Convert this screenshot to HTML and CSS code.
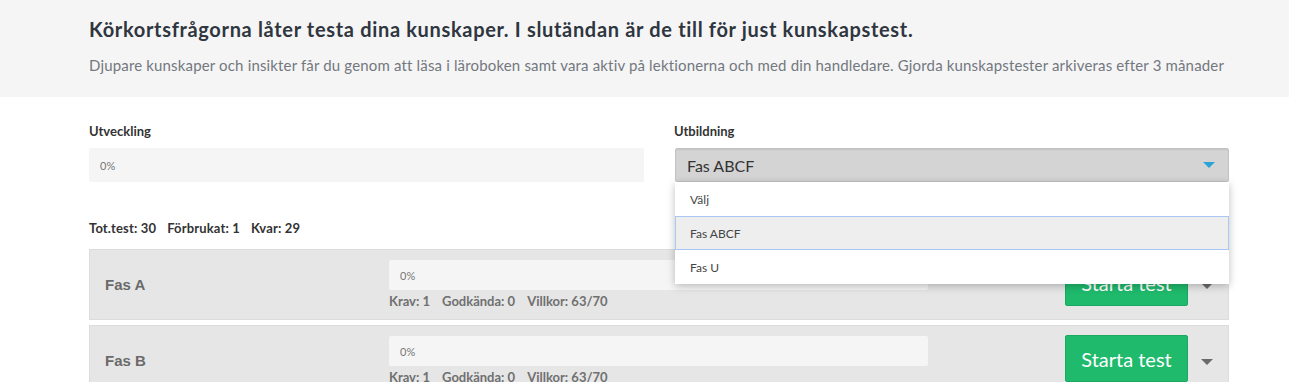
FILE: index.html
```html
<!DOCTYPE html>
<html lang="sv">
<head>
<meta charset="utf-8">
<title>Kunskapstest</title>
<link rel="stylesheet" href="styles.css">
</head>
<body>
<header class="intro">
  <h1 class="intro-title">Körkortsfrågorna låter testa dina kunskaper. I slutändan är de till för just kunskapstest.</h1>
  <p class="intro-text">Djupare kunskaper och insikter får du genom att läsa i läroboken samt vara aktiv på lektionerna och med din handledare. Gjorda kunskapstester arkiveras efter 3 månader</p>
</header>
<main class="content">
  <div class="top-grid">
    <div class="field">
      <div class="field-label">Utveckling</div>
      <div class="progress progress-lg"><span class="progress-text">0%</span></div>
    </div>
    <div class="field field-select">
      <div class="field-label">Utbildning</div>
      <div class="select">
        <span class="select-value">Fas ABCF</span>
        <span class="select-caret"></span>
      </div>
      <ul class="select-menu">
        <li class="select-option">Välj</li>
        <li class="select-option is-active">Fas ABCF</li>
        <li class="select-option">Fas U</li>
      </ul>
    </div>
  </div>
  <div class="stats"><span>Tot.test: 30</span><span>Förbrukat: 1</span><span>Kvar: 29</span></div>
  <div class="phase">
    <div class="phase-name">Fas A</div>
    <div class="phase-progress">
      <div class="progress"><span class="progress-text">0%</span></div>
      <div class="phase-meta"><span>Krav: 1</span><span>Godkända: 0</span><span>Villkor: 63/70</span></div>
    </div>
    <div class="phase-actions">
      <button class="btn-start">Starta test</button>
      <span class="phase-caret"></span>
    </div>
  </div>
  <div class="phase">
    <div class="phase-name">Fas B</div>
    <div class="phase-progress">
      <div class="progress"><span class="progress-text">0%</span></div>
      <div class="phase-meta"><span>Krav: 1</span><span>Godkända: 0</span><span>Villkor: 63/70</span></div>
    </div>
    <div class="phase-actions">
      <button class="btn-start">Starta test</button>
      <span class="phase-caret"></span>
    </div>
  </div>
</main>
</body>
</html>
```
FILE: styles.css
```css
* { box-sizing: border-box; }
html, body { margin: 0; padding: 0; background: #fff; }
body {
  font-family: Lato, "Open Sans", "Liberation Sans", sans-serif;
  color: #333;
  overflow: hidden;
}
.intro {
  background: #f5f5f5;
  height: 97px;
  padding: 16px 0 0 89px;
}
.intro-title {
  margin: 0;
  font-size: 20px;
  font-weight: 700;
  line-height: 26px;
  letter-spacing: 0.67px;
  color: #2f3640;
}
.intro-text {
  margin: 13px 0 0;
  font-size: 15px;
  line-height: 20px;
  letter-spacing: 0.16px;
  color: #737880;
}
.content {
  width: 1229px;
  padding: 25px 0 0 89px;
}
.top-grid {
  display: grid;
  grid-template-columns: 555px 555px;
  column-gap: 30px;
}
.field { position: relative; }
.field-label {
  font-size: 13px;
  font-weight: 700;
  line-height: 18px;
  color: #333;
  margin-bottom: 8px;
}
.progress {
  background: #f5f5f5;
  border-radius: 2px;
  height: 30px;
  display: flex;
  align-items: center;
  padding-left: 11px;
}
.progress-lg { height: 34px; }
.progress-text {
  font-size: 11px;
  color: #777;
}
.select {
  height: 34px;
  margin-left: 1px;
  background: #d4d4d4;
  border: 1px solid #c4c4c4;
  border-radius: 2px;
  box-shadow: inset 0 1px 1px rgba(0,0,0,0.08);
  display: flex;
  align-items: center;
  justify-content: space-between;
  padding: 0 13px 0 11px;
}
.select-value { font-size: 16px; color: #333; }
.select-caret {
  width: 0; height: 0;
  border-left: 6px solid transparent;
  border-right: 6px solid transparent;
  border-top: 6px solid #2aa3d6;
}
.select-menu {
  position: absolute;
  left: 1px; right: 0;
  top: 60px;
  margin: 0;
  padding: 0;
  list-style: none;
  background: #fff;
  box-shadow: 0 2px 8px rgba(0,0,0,0.25);
  z-index: 5;
}
.select-option {
  height: 34px;
  display: flex;
  align-items: center;
  padding-left: 14px;
  font-size: 12px;
  color: #444;
  border: 1px solid transparent;
}
.select-option.is-active {
  background: #eee;
  border-color: #a9c6f5;
}
.stats {
  margin-top: 37px;
  display: flex;
  gap: 11px;
  font-size: 13px;
  font-weight: 700;
  line-height: 18px;
  letter-spacing: 0.15px;
  color: #333;
}
.phase {
  margin-top: 12px;
  display: flex;
  background: #e6e6e6;
  border: 1px solid #dcdcdc;
  height: 71px;
}
.phase + .phase { margin-top: 5px; }
.phase-name {
  width: 299px;
  padding-left: 15px;
  display: flex;
  align-items: center;
  font-family: "Liberation Sans", Arial, sans-serif;
  font-weight: 700;
  font-size: 15px;
  color: #6a6a6a;
}
.phase-progress {
  width: 539px;
  padding-top: 10px;
}
.phase-meta {
  display: flex;
  gap: 12px;
  margin-top: 2px;
  font-size: 13px;
  font-weight: 700;
  line-height: 18px;
  color: #707070;
}
.phase-actions {
  flex: 1;
  display: flex;
  align-items: flex-start;
  padding: 9px 0 0 137px;
}
.btn-start {
  width: 123px;
  height: 47px;
  background: #1fba6c;
  border: 1px solid #1aa862;
  border-radius: 2px;
  color: #fff;
  font-family: inherit;
  font-size: 20px;
  padding: 0;
}
.phase-caret {
  margin: 24px 0 0 13px;
  width: 0; height: 0;
  border-left: 6px solid transparent;
  border-right: 6px solid transparent;
  border-top: 6px solid #6b6b6b;
}
```
